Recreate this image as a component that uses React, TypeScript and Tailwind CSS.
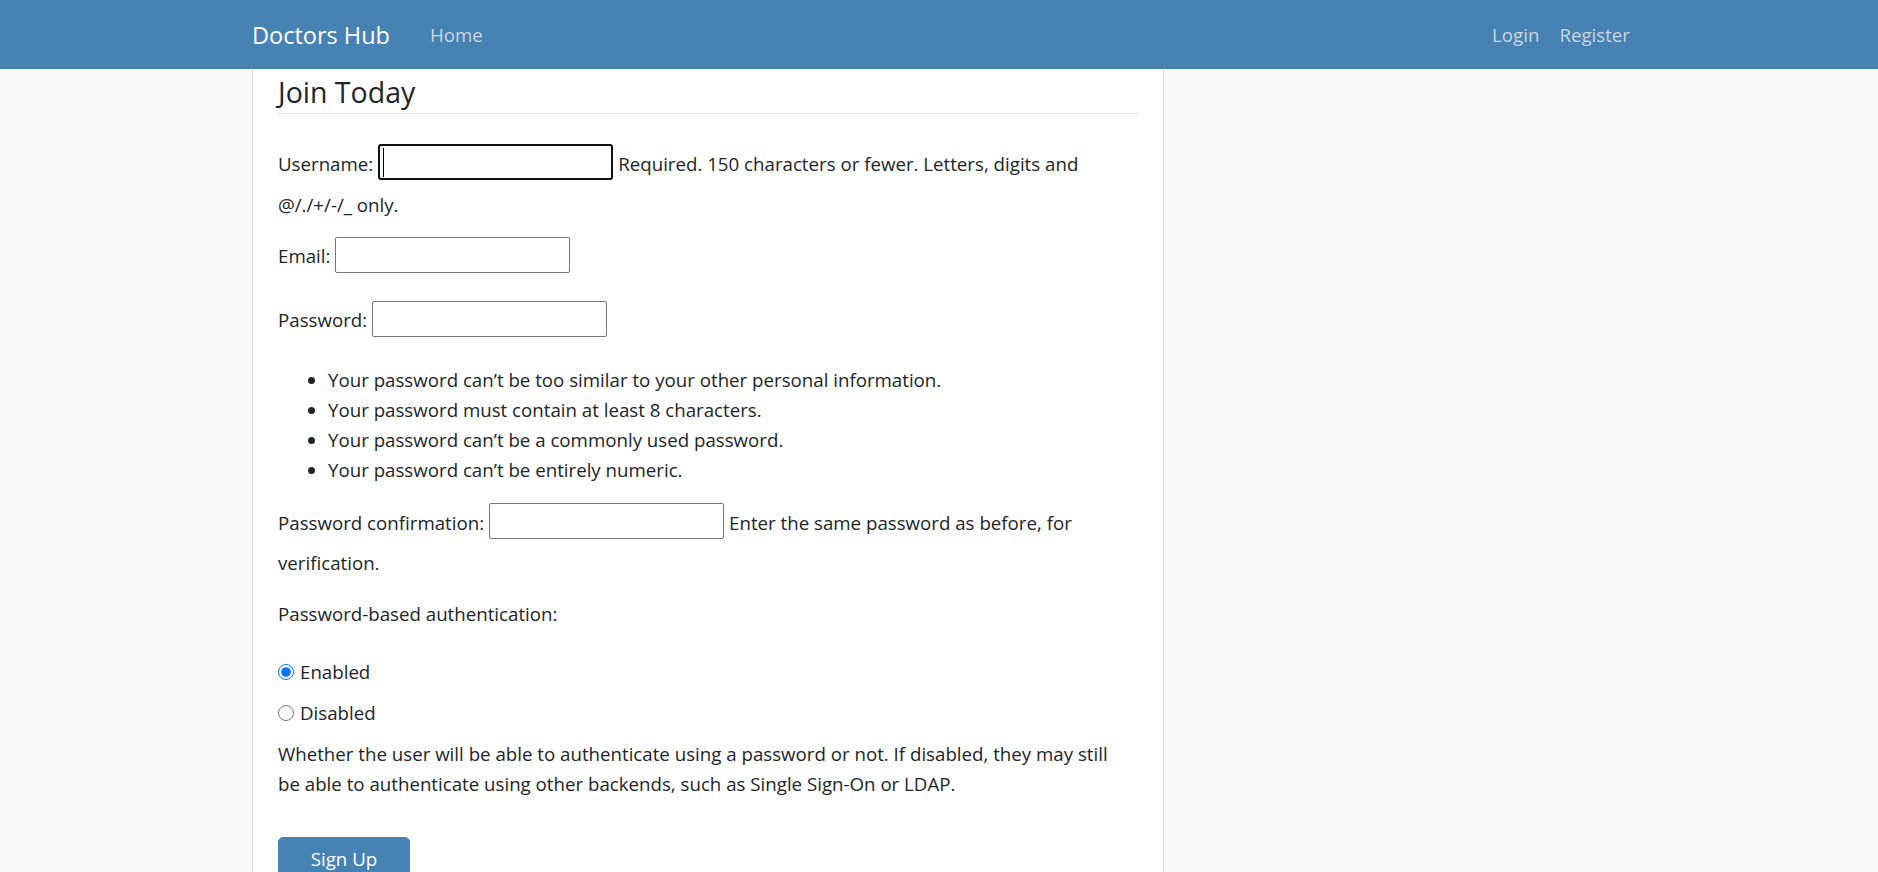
import React from "react";

const font = { fontFamily: '"Open Sans", "Noto Sans", sans-serif' };

const TextInput = ({ focused = false }: { focused?: boolean }) =>
  focused ? (
    <span className="relative inline-block h-[36px] w-[235px] shrink-0 rounded-[3px] border-2 border-[#101010] bg-white">
      <span className="absolute left-[3px] top-[2px] h-[29px] w-px bg-black" />
    </span>
  ) : (
    <input
      type="text"
      className="h-[36px] w-[235px] shrink-0 rounded-[2px] border border-[#767676] bg-white outline-none"
    />
  );

const passwordRules = [
  "Your password can\u2019t be too similar to your other personal information.",
  "Your password must contain at least 8 characters.",
  "Your password can\u2019t be a commonly used password.",
  "Your password can\u2019t be entirely numeric.",
];

export default function App() {
  return (
    <div className="h-[872px] overflow-hidden bg-[#fafafa] text-[#212529]" style={font}>
      <header className="h-[69px] bg-[#4682b4]">
        <nav className="ml-[252px] flex h-full w-[1388px] items-center justify-between pt-[2px]">
          <div className="flex items-center">
            <a href="#" className="text-[23.5px] text-white">
              Doctors Hub
            </a>
            <a href="#" className="ml-[30px] px-[10px] text-[18.7px] text-[#cbd5db]">
              Home
            </a>
          </div>
          <div className="flex items-center text-[18.7px] text-[#cbd5db]">
            <a href="#" className="px-[10px]">
              Login
            </a>
            <a href="#" className="px-[10px]">
              Register
            </a>
          </div>
        </nav>
      </header>

      <main className="ml-[252px] h-[803px] w-[912px] border-x border-[#dddddd] bg-white px-[25px] text-[18.7px] leading-[30px]">
        <form>
          <div className="flex h-[45px] items-center border-b border-[#dee2e6] pt-[2px] text-[28.5px]">
            Join Today
          </div>

          <div className="mt-[30px]">
            <div className="flex h-[36px] items-center gap-[5px] whitespace-nowrap">
              <label className="pt-[4px]">Username:</label>
              <TextInput focused />
              <span className="pt-[4px]">Required. 150 characters or fewer. Letters, digits and</span>
            </div>
            <div className="mt-[10px] h-[30px]">@/./+/-/_ only.</div>
          </div>

          <div className="mt-[17px] flex h-[36px] items-center gap-[5px]">
            <label className="pt-[2px]">Email:</label>
            <TextInput />
          </div>

          <div className="mt-[28px] flex h-[36px] items-center gap-[5px]">
            <label className="pt-[2px]">Password:</label>
            <TextInput />
          </div>

          <ul className="mt-[28px] list-disc pl-[50px]">
            {passwordRules.map((rule) => (
              <li key={rule} className="h-[30px] whitespace-nowrap">
                {rule}
              </li>
            ))}
          </ul>

          <div className="mt-[18px]">
            <div className="flex h-[36px] items-center gap-[5px] whitespace-nowrap">
              <label className="pt-[3px]">Password confirmation:</label>
              <TextInput />
              <span className="pt-[3px]">Enter the same password as before, for</span>
            </div>
            <div className="mt-[9px] h-[30px]">verification.</div>
          </div>

          <div className="mt-[21px] h-[30px]">Password-based authentication:</div>

          <label className="mt-[28px] flex h-[30px] items-center gap-[6px]">
            <input type="radio" name="usable_password" defaultChecked className="m-0 h-[16px] w-[16px]" />
            Enabled
          </label>
          <label className="mt-[11px] flex h-[30px] items-center gap-[6px]">
            <input type="radio" name="usable_password" className="m-0 h-[16px] w-[16px]" />
            Disabled
          </label>

          <p className="mt-[11px] whitespace-nowrap">
            Whether the user will be able to authenticate using a password or not. If disabled, they may still
            <br />
            be able to authenticate using other backends, such as Single Sign-On or LDAP.
          </p>

          <button
            type="button"
            className="mt-[38px] h-[47px] w-[132px] rounded-[5px] border border-[#4682b4] bg-[#4682b4] pb-[4px] text-[18.7px] text-white"
          >
            Sign Up
          </button>
        </form>
      </main>
    </div>
  );
}
